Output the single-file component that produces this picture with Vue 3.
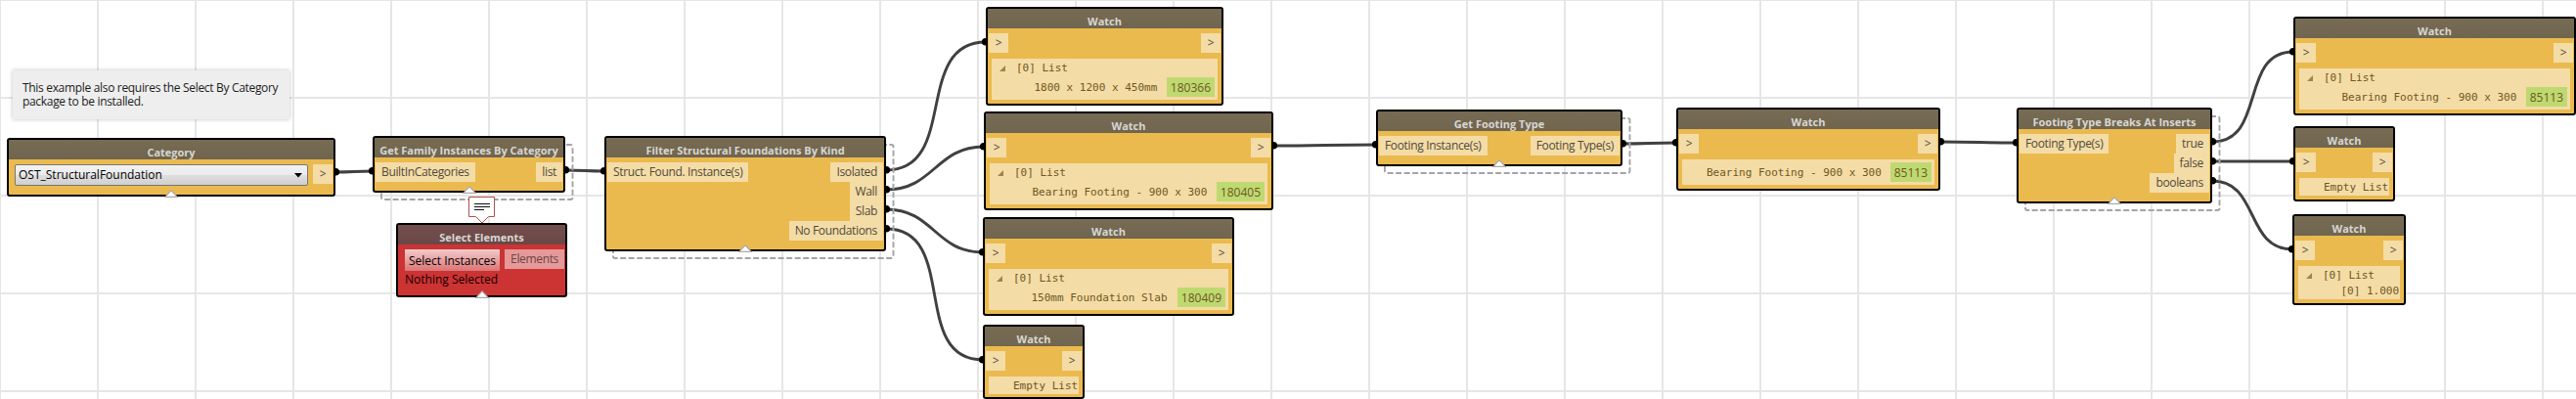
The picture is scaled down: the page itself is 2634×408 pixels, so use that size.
<script setup>
const nodes = [
  { id: 'category', title: 'Category', x: 7, y: 141, w: 336, h: 60, select: 'OST_StructuralFoundation', outs: ['>'], grip: true },
  { id: 'family', title: 'Get Family Instances By Category', x: 381, y: 139, w: 197, h: 58, ins: ['BuiltInCategories'], outs: ['list'], grip: true, stacked: true },
  { id: 'elements', title: 'Select Elements', x: 405, y: 228, w: 175, h: 76, error: true, button: 'Select Instances', outs: ['Elements'], status: 'Nothing Selected', grip: true },
  { id: 'filter', title: 'Filter Structural Foundations By Kind', x: 618, y: 139, w: 288, h: 118, ins: ['Struct. Found. Instance(s)'], outs: ['Isolated', 'Wall', 'Slab', 'No Foundations'], grip: true, stacked: true },
  { id: 'w1', title: 'Watch', x: 1008, y: 7, w: 243, h: 101, ins: ['>'], outs: ['>'], list: true, rows: [{ text: '1800 x 1200 x 450mm', id: '180366' }] },
  { id: 'w2', title: 'Watch', x: 1006, y: 114, w: 296, h: 101, ins: ['>'], outs: ['>'], list: true, rows: [{ text: 'Bearing Footing - 900 x 300', id: '180405' }] },
  { id: 'w3', title: 'Watch', x: 1005, y: 222, w: 257, h: 101, ins: ['>'], outs: ['>'], list: true, rows: [{ text: '150mm Foundation Slab', id: '180409' }] },
  { id: 'w4', title: 'Watch', x: 1005, y: 332, w: 104, h: 76, ins: ['>'], outs: ['>'], rows: [{ text: 'Empty List' }] },
  { id: 'footing', title: 'Get Footing Type', x: 1407, y: 112, w: 252, h: 58, ins: ['Footing Instance(s)'], outs: ['Footing Type(s)'], grip: true, stacked: true },
  { id: 'w5', title: 'Watch', x: 1714, y: 110, w: 270, h: 85, ins: ['>'], outs: ['>'], rows: [{ text: 'Bearing Footing - 900 x 300', id: '85113' }] },
  { id: 'breaks', title: 'Footing Type Breaks At Inserts', x: 2062, y: 110, w: 200, h: 98, ins: ['Footing Type(s)'], outs: ['true', 'false', 'booleans'], grip: true, stacked: true },
  { id: 'w6', title: 'Watch', x: 2345, y: 17, w: 289, h: 101, ins: ['>'], outs: ['>'], list: true, rows: [{ text: 'Bearing Footing - 900 x 300', id: '85113' }] },
  { id: 'w7', title: 'Watch', x: 2345, y: 129, w: 104, h: 77, ins: ['>'], outs: ['>'], rows: [{ text: 'Empty List' }] },
  { id: 'w8', title: 'Watch', x: 2344, y: 219, w: 116, h: 93, ins: ['>'], outs: ['>'], list: true, rows: [{ text: '[0] 1.000' }] }
]

const links = [
  ['category', 0, 'family'],
  ['family', 0, 'filter'],
  ['filter', 0, 'w1'],
  ['filter', 1, 'w2'],
  ['filter', 2, 'w3'],
  ['filter', 3, 'w4'],
  ['w2', 0, 'footing'],
  ['footing', 0, 'w5'],
  ['w5', 0, 'breaks'],
  ['breaks', 0, 'w6'],
  ['breaks', 1, 'w7'],
  ['breaks', 2, 'w8']
]

const byId = Object.fromEntries(nodes.map(n => [n.id, n]))

const wires = links.map(([from, port, to]) => {
  const a = byId[from]
  const b = byId[to]
  const x1 = a.x + a.w
  const y1 = a.y + 35 + port * 20
  const x2 = b.x
  const y2 = b.y + 36
  const k = 0.45 * Math.hypot(x2 - x1, y2 - y1)
  return { x1, y1, x2, y2, d: `M${x1} ${y1}C${x1 + k} ${y1} ${x2 - k} ${y2} ${x2} ${y2}` }
})

const stacks = nodes.filter(n => n.stacked)
const box = n => ({ left: n.x + 'px', top: n.y + 'px', width: n.w + 'px', height: n.h + 'px' })
</script>

<template>
  <main class="canvas">
    <aside class="note">This example also requires the Select By Category<br>package to be installed.</aside>

    <svg class="wires" width="2634" height="408">
      <path v-for="w in wires" :key="w.d" :d="w.d" class="wire" />
      <rect v-for="s in stacks" :key="s.id" class="stack" :x="s.x + 9" :y="s.y + 9" :width="s.w - 1.5" :height="s.h - 2" rx="2" />
      <g v-for="w in wires" :key="'c' + w.d">
        <circle :cx="w.x1 + 0.3" :cy="w.y1 - 0.2" r="3.8" />
        <circle :cx="w.x2 - 0.3" :cy="w.y2 - 0.2" r="3.8" />
      </g>
    </svg>

    <section v-for="n in nodes" :key="n.id" class="node" :class="{ error: n.error }" :style="box(n)">
      <header class="title">{{ n.title }}</header>
      <div class="ports">
        <div class="side">
          <span v-for="p in n.ins" :key="p" class="port" :class="{ arrow: p === '>' }">{{ p }}</span>
        </div>
        <div v-if="n.select" class="select">
          <span>{{ n.select }}</span>
          <svg width="8" height="5" viewBox="0 0 8 5"><path d="M0 0h8L4 4.6z" /></svg>
        </div>
        <div v-if="n.button" class="picker">
          <button class="button">{{ n.button }}</button>
          <span class="status">{{ n.status }}</span>
        </div>
        <div class="side outs">
          <span v-for="p in n.outs" :key="p" class="port" :class="{ arrow: p === '>' }">{{ p }}</span>
        </div>
      </div>
      <div v-if="n.rows" class="watch">
        <div v-if="n.list" class="head">
          <svg width="6" height="6" viewBox="0 0 6 6"><path d="M6 0v6H0z" /></svg>
          <span>[0] List</span>
        </div>
        <div v-for="r in n.rows" :key="r.text" class="row" :class="{ nested: n.list, tagged: r.id }">
          <span class="value">{{ r.text }}</span>
          <span v-if="r.id" class="tag">{{ r.id }}</span>
        </div>
      </div>
      <svg v-if="n.grip" class="grip" width="14" height="8" viewBox="0 0 14 8">
        <path d="M0.8 7.3L7 0.8L13.2 7.3z" />
      </svg>
    </section>

    <svg class="comment" width="28" height="28" viewBox="0 0 28 28">
      <path class="bubble" d="M0.5 0.5H26.5V20.5H20.5L14 27L7.5 20.5H0.5z" />
      <path class="lines" d="M6 7.5H22M6 10.5H22M6 13.5H16" />
    </svg>
  </main>
</template>

<style>
body {
  margin: 0;
}
</style>

<style scoped>
.canvas {
  position: relative;
  width: 2634px;
  height: 408px;
  overflow: hidden;
  background-color: #fff;
  background-image:
    linear-gradient(90deg, #e6e6e6 2px, transparent 2px),
    linear-gradient(#e6e6e6 2px, transparent 2px);
  background-size: 100px 100px;
  background-position: -1px -1px;
  font: 12px/20px "Open Sans", sans-serif;
}

.note {
  position: absolute;
  left: 13px;
  top: 72px;
  width: 283px;
  height: 50px;
  box-sizing: border-box;
  padding: 10.5px 10px;
  background: #eee;
  box-shadow: 0 0 4px rgba(0, 0, 0, 0.25);
  color: #1c1c1c;
  line-height: 14px;
  letter-spacing: -0.32px;
  white-space: nowrap;
}

.wires {
  position: absolute;
  left: 0;
  top: 0;
}

.wire {
  fill: none;
  stroke: #404040;
  stroke-width: 2.9;
}

.stack {
  fill: none;
  stroke: #a4a4a4;
  stroke-width: 1.9;
  stroke-dasharray: 6 2.5;
}

.node {
  position: absolute;
  display: flex;
  flex-direction: column;
  box-sizing: border-box;
  border: 2px solid #000;
  border-radius: 3px;
  background: #ebba4e;
  white-space: nowrap;
}

.title {
  flex: none;
  box-sizing: border-box;
  height: 20px;
  padding-top: 3px;
  background: linear-gradient(#776b54, #70654e);
  color: #d8d6d2;
  font-size: 11px;
  font-weight: 700;
  text-align: center;
}

.ports {
  display: flex;
  flex: none;
  justify-content: space-between;
  padding: 5px 1px 0;
}

.side {
  display: flex;
  flex-direction: column;
  align-items: flex-start;
}

.outs {
  align-items: flex-end;
}

.port {
  height: 20px;
  padding: 0 6px;
  background: #f4dca6;
  color: #504a3c;
  line-height: 19px;
  letter-spacing: -0.34px;
}

.arrow {
  width: 20px;
  padding: 0;
  text-align: center;
  line-height: 20px;
}

.select {
  display: flex;
  flex: 1;
  align-items: center;
  justify-content: space-between;
  box-sizing: border-box;
  height: 22px;
  margin: 0 5px;
  padding: 0 5px 0 3px;
  border: 1px solid #777;
  border-radius: 2px;
  background: linear-gradient(#f2f2f2, #ebebeb 48%, #dedede 52%, #cfcfcf);
  color: #000;
}

.picker {
  display: flex;
  flex-direction: column;
  align-items: flex-start;
  margin-left: 6px;
  margin-right: auto;
}

.button {
  width: 97px;
  height: 22px;
  padding: 2px 0 0;
  border: 0;
  background: linear-gradient(#f2cccc, #dc7474);
  color: #000;
  font: inherit;
}

.status {
  height: 20px;
  line-height: 17px;
  color: #100;
}

.watch {
  margin: 6px 4px 0;
  background: #f4dca6;
  color: #6e5722;
  font: 11px/18px "DejaVu Sans Mono", monospace;
}

.head {
  display: flex;
  align-items: center;
  gap: 11px;
  height: 16px;
  padding: 3px 0 0 8px;
  box-sizing: border-box;
}

.head path {
  fill: #a08548;
}

.row {
  display: flex;
  align-items: center;
  height: 18px;
  padding-left: 25px;
}

.value {
  padding-top: 1px;
}

.nested {
  padding-left: 43.5px;
}

.tagged {
  justify-content: space-between;
  height: 26px;
  padding-right: 3px;
}

.tag {
  height: 20px;
  padding: 0 4px;
  background: #bfd971;
  font: 12px/21px "Open Sans", sans-serif;
}

.grip {
  position: absolute;
  left: calc(50% - 7px);
  bottom: -3px;
}

.grip path {
  fill: #fff;
  stroke: #aaa;
  stroke-width: 1.2;
}

.error {
  background: #cc3333;
}

.error .title {
  background: linear-gradient(#744e4e, #6a4747);
}

.error .port {
  background: #e59999;
  color: #6b4646;
}

.comment {
  position: absolute;
  left: 479px;
  top: 201px;
}

.bubble {
  fill: #fff;
  stroke: #b05050;
}

.lines {
  fill: none;
  stroke: #111;
}
</style>
